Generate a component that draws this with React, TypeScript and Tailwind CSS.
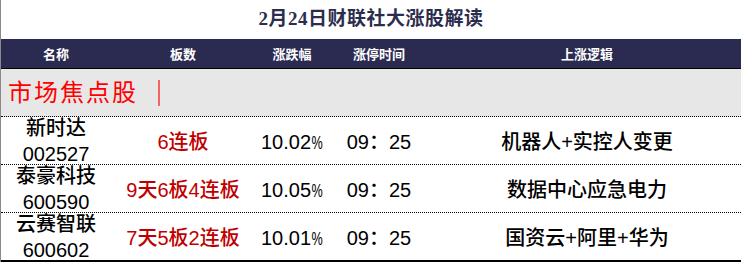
import React from "react";

const cjk = '"Liberation Sans", "Noto Sans CJK SC", sans-serif';

type Row = { name: string; code: string; board: string; pct: string; time: string; logic: string };

const rows: Row[] = [
  { name: "新时达", code: "002527", board: "6连板", pct: "10.02", time: "09：25", logic: "机器人+实控人变更" },
  { name: "泰豪科技", code: "600590", board: "9天6板4连板", pct: "10.05", time: "09：25", logic: "数据中心应急电力" },
  { name: "云赛智联", code: "600602", board: "7天5板2连板", pct: "10.01", time: "09：25", logic: "国资云+阿里+华为" },
];

const cols = "grid grid-cols-[110px_144px_74px_100px_1fr]";

export default function App() {
  return (
    <div
      className="w-[741px] h-[262px] bg-white border-l border-[#8a8a8a] flex flex-col overflow-hidden"
      style={{ fontFamily: cjk }}
    >
      <div
        className="h-[39px] flex items-center justify-center text-[19px] tracking-[0.5px] font-semibold text-[#2c2c4e]"
        style={{ fontFamily: '"Liberation Serif", "Noto Sans CJK SC", serif' }}
      >
        2月24日财联社大涨股解读
      </div>
      <div className={`${cols} h-[30px] bg-[#2b2a51] border-b border-black text-white text-[13px] font-bold items-center pt-[3px]`}>
        <div className="text-center">名称</div>
        <div className="text-center">板数</div>
        <div className="text-center">涨跌幅</div>
        <div className="text-center">涨停时间</div>
        <div className="text-center pl-[4px]">上涨逻辑</div>
      </div>
      <div className="h-[48px] bg-[#e7e7e7] border-b border-dotted border-black flex items-center pl-[7px]">
        <span
          className="text-[24px] tracking-[2px] text-[#ff0000]"
          style={{ fontFamily: '"Liberation Serif", "Noto Sans CJK SC", serif' }}
        >
          市场焦点股
        </span>
        <span className="ml-[20px] w-[2px] h-[26px] bg-[#f46464]" />
      </div>
      {rows.map((r, i) => (
        <div
          key={r.code}
          className={`${cols} ${i === rows.length - 1 ? "h-[49px] border-b-2 border-solid" : "h-[48px] border-b border-dotted"} border-black items-center text-[20px] font-medium text-black`}
        >
          <div className="h-[47px] flex flex-col items-center justify-center gap-[2px] leading-[24px]">
            <span>{r.name}</span>
            <span>{r.code}</span>
          </div>
          <div className="text-center text-[#c00000] pt-[2px]">{r.board}</div>
          <div className="text-center pt-[2px]">
            {r.pct}
            <span className="inline-block text-[18px] scale-x-[0.7] -ml-[2px] -mr-[2px]">%</span>
          </div>
          <div className="text-center pt-[2px]">{r.time}</div>
          <div className="text-center pt-[2px] pl-[4px]">{r.logic}</div>
        </div>
      ))}
    </div>
  );
}
